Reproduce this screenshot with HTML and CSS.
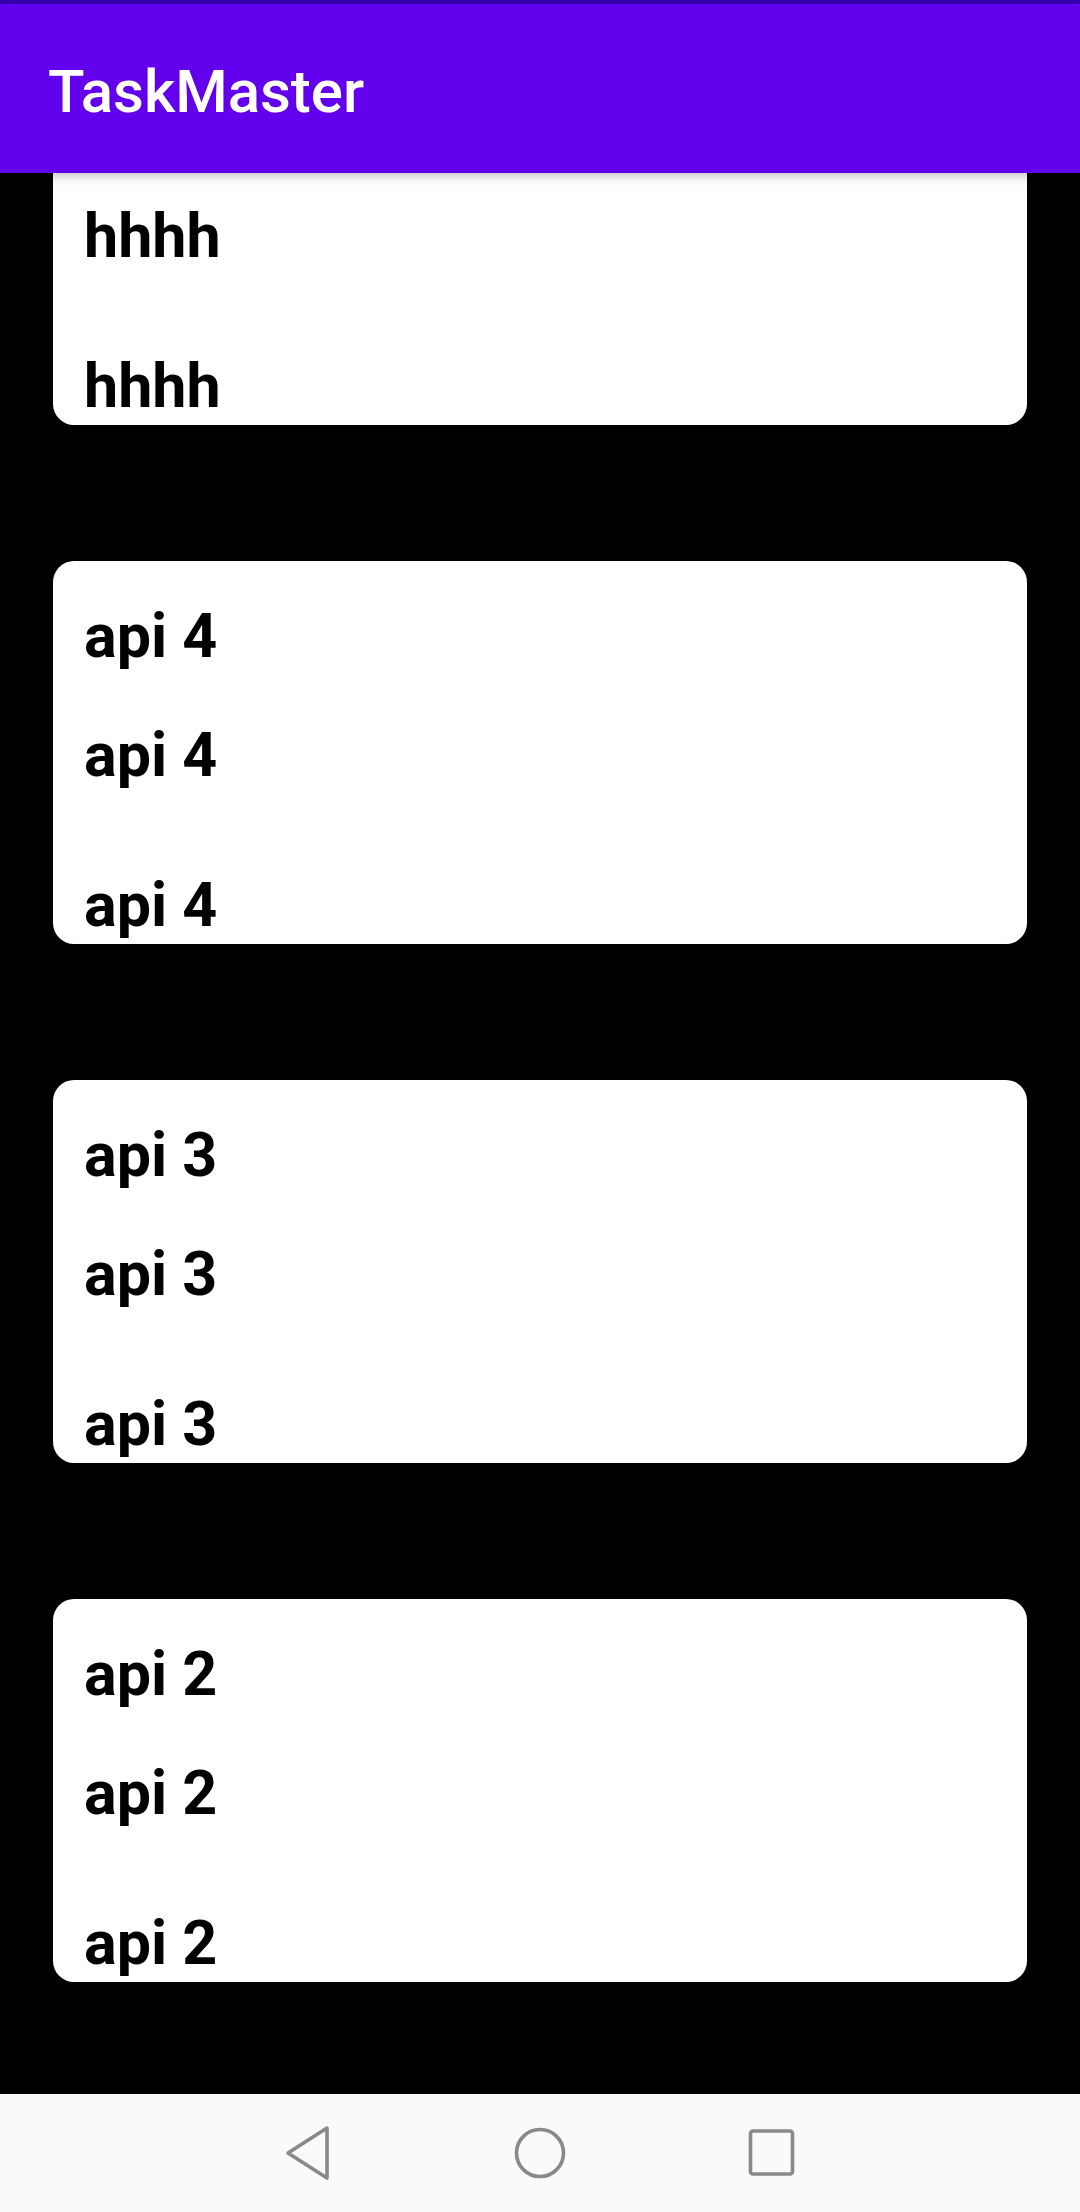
FILE: index.html
```html
<!DOCTYPE html>
<html lang="en">
<head>
<meta charset="utf-8">
<title>TaskMaster</title>
<link rel="stylesheet" href="styles.css">
</head>
<body>
<div class="screen">
  <div class="statusbar"></div>
  <header class="appbar"><h1 class="title">TaskMaster</h1></header>
  <main class="viewport">
    <div class="list">
      <div class="card">
        <div class="line">hhhh</div>
        <div class="line second">hhhh</div>
        <div class="line third">hhhh</div>
      </div>
      <div class="card">
        <div class="line">api 4</div>
        <div class="line second">api 4</div>
        <div class="line third">api 4</div>
      </div>
      <div class="card">
        <div class="line">api 3</div>
        <div class="line second">api 3</div>
        <div class="line third">api 3</div>
      </div>
      <div class="card">
        <div class="line">api 2</div>
        <div class="line second">api 2</div>
        <div class="line third">api 2</div>
      </div>
    </div>
  </main>
  <nav class="navbar">
    <div class="slot">
      <svg width="48" height="58" viewBox="0 0 48 58"><path d="M43 4 L4 29 L43 54 Z" fill="none" stroke="#898989" stroke-width="3.6" stroke-linejoin="round"/></svg>
    </div>
    <div class="slot">
      <svg width="58" height="58" viewBox="0 0 58 58"><circle cx="29" cy="29" r="23.5" fill="none" stroke="#898989" stroke-width="3.6"/></svg>
    </div>
    <div class="slot">
      <svg width="58" height="58" viewBox="0 0 58 58"><rect x="7.5" y="7" width="42" height="43" rx="2.5" fill="none" stroke="#898989" stroke-width="3.6"/></svg>
    </div>
  </nav>
</div>
</body>
</html>
```

FILE: styles.css
```css
* { box-sizing: border-box; }
html, body { margin: 0; padding: 0; }
body {
  background: #000;
  font-family: Roboto, "Noto Sans", "Liberation Sans", sans-serif;
}
.screen {
  width: 1080px;
  height: 2212px;
  display: flex;
  flex-direction: column;
  overflow: hidden;
  background: #000;
}
.statusbar {
  height: 4px;
  background: #3700b3;
  flex: none;
}
.appbar {
  height: 169px;
  flex: none;
  background: #6200ee;
  position: relative;
  z-index: 2;
  box-shadow: 0 3px 10px rgba(0, 0, 0, 0.25);
  padding: 51px 0 0 48px;
}
.title {
  margin: 0;
  color: #fff;
  font-family: Roboto, sans-serif;
  font-weight: 500;
  font-size: 60px;
  line-height: 74px;
  letter-spacing: 0;
}
.viewport {
  flex: 1;
  overflow: hidden;
}
.list {
  margin-top: -131px;
  display: flex;
  flex-direction: column;
  gap: 136px;
  padding: 0 53px;
}
.card {
  background: #fff;
  border-radius: 21px;
  height: 383px;
  padding: 38px 0 0 31px;
  overflow: hidden;
}
.line {
  font-family: Roboto, sans-serif;
  font-weight: 700;
  font-size: 61px;
  line-height: 74px;
  color: #000;
}
.second { margin-top: 45px; }
.third { margin-top: 76px; }
.navbar {
  height: 118px;
  flex: none;
  background: #fafafa;
  display: flex;
  justify-content: center;
  align-items: center;
}
.slot {
  width: 232px;
  display: flex;
  justify-content: center;
  align-items: center;
}
.slot svg { display: block; }
```
